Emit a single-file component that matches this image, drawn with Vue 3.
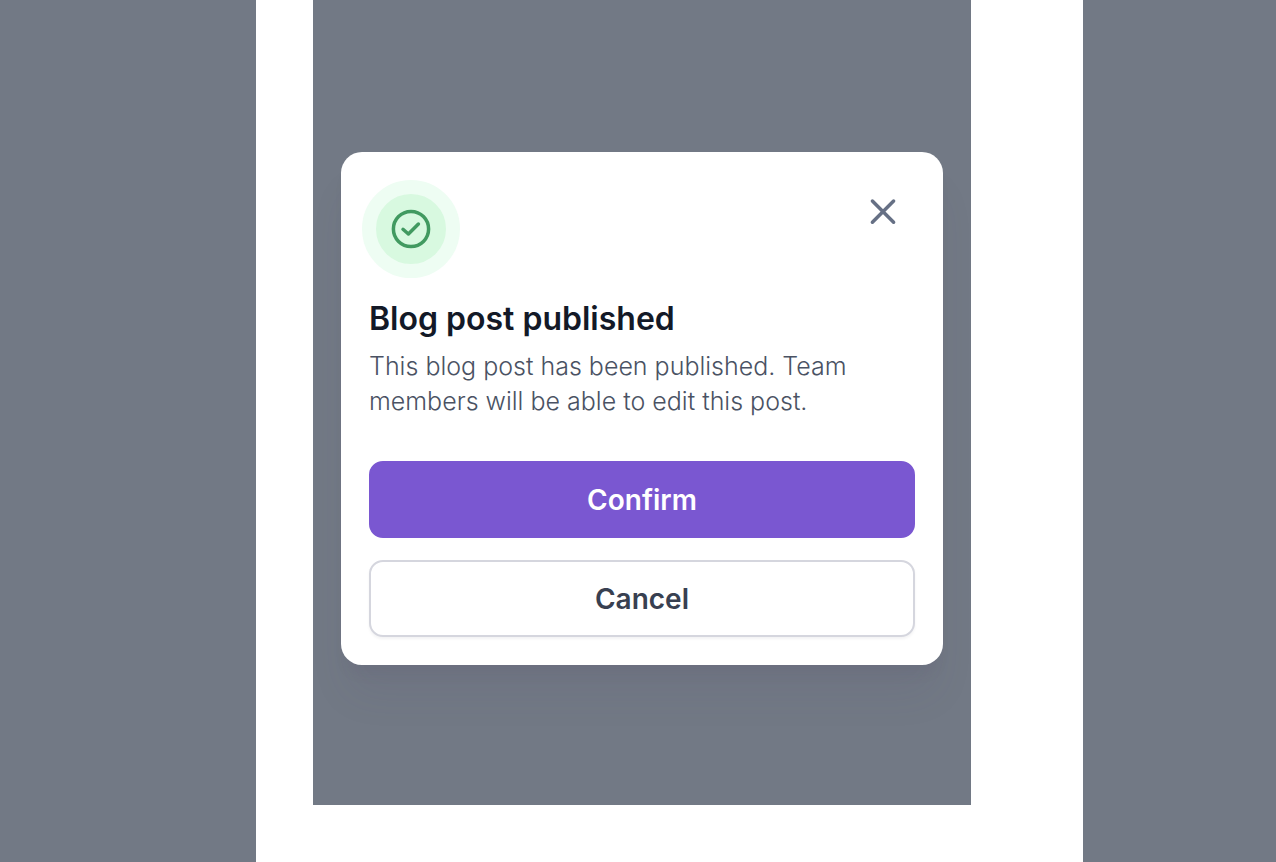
<script setup>
import { ref } from 'vue'

const open = ref(true)
const close = () => { open.value = false }
</script>

<template>
  <div class="page">
    <div class="sheet">
      <main class="stage">
        <section v-if="open" class="dialog" role="dialog" aria-labelledby="dialog-title" aria-describedby="dialog-text">
          <header class="top">
            <span class="badge">
              <svg class="check" viewBox="0 0 42 42" aria-hidden="true">
                <circle cx="21" cy="21" r="17.6" />
                <path d="M13 21.3L18.4 26L28.4 16" />
              </svg>
            </span>
            <button class="close" type="button" aria-label="Close" @click="close">
              <svg class="cross" viewBox="0 0 42 42" aria-hidden="true">
                <path d="M31.6 10L10.4 31.2M10.4 10L31.6 31.2" />
              </svg>
            </button>
          </header>
          <h1 id="dialog-title" class="title">Blog post published</h1>
          <p id="dialog-text" class="text">This blog post has been published. Team members will be able to edit this post.</p>
          <div class="actions">
            <button class="btn primary" type="button" @click="close">Confirm</button>
            <button class="btn secondary" type="button" @click="close">Cancel</button>
          </div>
        </section>
      </main>
    </div>
  </div>
</template>

<style>
body {
  margin: 0;
}
</style>

<style scoped>
.page {
  box-sizing: border-box;
  min-height: 100vh;
  display: flex;
  padding: 0 193px 0 256px;
  background: #727985;
  font-family: Inter, "Liberation Sans", sans-serif;
}

.sheet {
  flex: 1;
  display: flex;
  padding: 0 112px 57px 57px;
  background: #fff;
}

.stage {
  flex: 1;
  padding: 152px 28px 139px;
  background: #727985;
  overflow: hidden;
}

.dialog {
  padding: 28px;
  border-radius: 21px;
  background: #fff;
  box-shadow: 0 35px 42px -7px rgba(80, 70, 100, 0.08), 0 14px 14px -7px rgba(80, 70, 100, 0.1);
}

.top {
  display: flex;
  justify-content: space-between;
  align-items: flex-start;
}

.badge {
  box-sizing: border-box;
  width: 98px;
  height: 98px;
  margin-left: -7px;
  display: flex;
  align-items: center;
  justify-content: center;
  border: 14px solid #eefdf3;
  border-radius: 50%;
  background: #d8f9e0;
}

.check,
.cross {
  display: block;
  width: 42px;
  height: 42px;
  fill: none;
  stroke-width: 3.5;
  stroke-linecap: round;
  stroke-linejoin: round;
}

.check {
  stroke: #419a60;
}

.cross {
  stroke: #667085;
}

.close {
  margin: 4px 4px 0 0;
  padding: 7px;
  border: 0;
  background: none;
  cursor: pointer;
}

.title {
  margin: 17px 0 6px;
  font-size: 32px;
  line-height: 48px;
  font-weight: 600;
  color: #131927;
}

.text {
  margin: 0;
  font-size: 25px;
  line-height: 35px;
  font-weight: 350;
  color: #4a5263;
}

.actions {
  display: grid;
  gap: 22px;
  margin-top: 42px;
}

.btn {
  height: 77px;
  border-radius: 14px;
  font-family: inherit;
  font-size: 28px;
  line-height: 42px;
  font-weight: 600;
  cursor: pointer;
}

.primary {
  border: 2px solid #7a57d1;
  background: #7a57d1;
  color: #fff;
}

.secondary {
  border: 2px solid #d5d6de;
  background: #fff;
  color: #384051;
  box-shadow: 0 2px 3px rgba(16, 24, 40, 0.05);
}
</style>
